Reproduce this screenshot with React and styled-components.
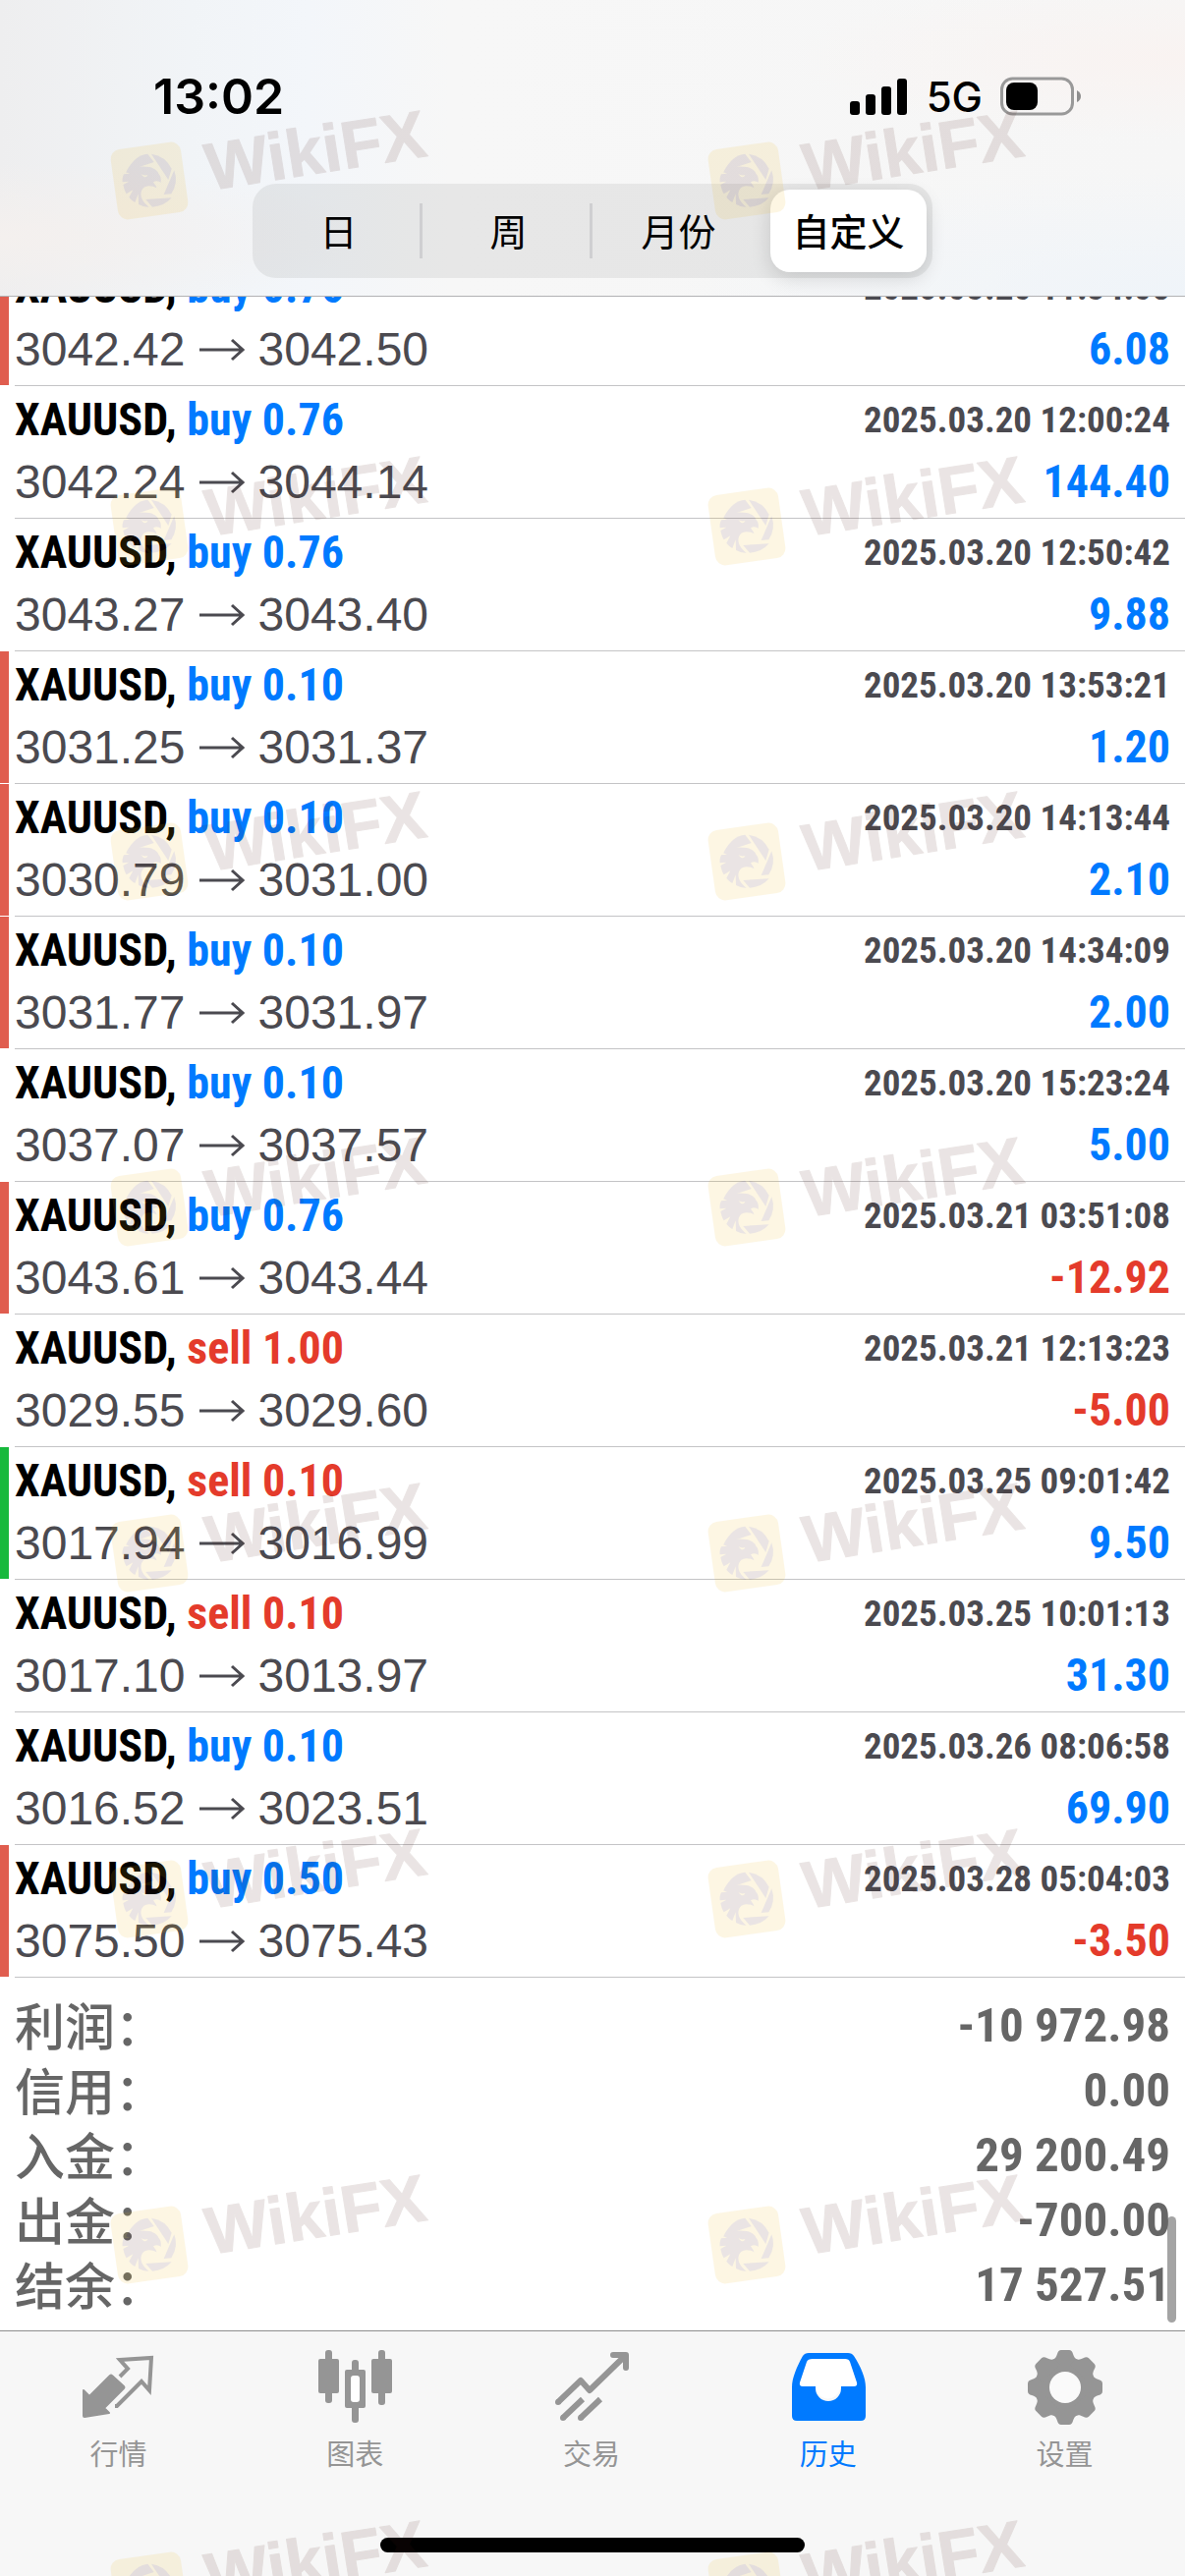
import React, { useState } from 'react';
import styled, { createGlobalStyle, ThemeProvider } from 'styled-components';

const theme = {
  colors: {
    blue: '#007aff',
    red: '#e43b2b',
    barRed: '#e05d4f',
    barGreen: '#17b93c',
    text: '#4b4a50',
    summary: '#666666',
    tab: '#959595',
    line: '#c4c4c6',
  },
  fonts: {
    bold: '"Roboto Condensed", "Liberation Sans", sans-serif',
    light: '"Liberation Sans", sans-serif',
    cjk: '"Noto Sans CJK SC", sans-serif',
    status: 'Inter, "Liberation Sans", sans-serif',
  },
};

const GlobalStyle = createGlobalStyle`
  *, *::before, *::after {
    box-sizing: border-box;
  }

  body {
    margin: 0;
    background: #fff;
  }

  button {
    border: none;
    background: none;
    padding: 0;
    color: inherit;
    cursor: pointer;
  }
`;

const Screen = styled.div`
  position: relative;
  display: flex;
  flex-direction: column;
  height: 100vh;
  overflow: hidden;
  background: #fff;
`;

const Header = styled.header`
  flex: none;
  padding: 67px 0 18px;
  border-bottom: 1px solid #b2b2b4;
  background:
    radial-gradient(ellipse at 0% 80%, #f4f0ee 0%, rgba(244, 240, 238, 0) 22%),
    radial-gradient(ellipse at 100% 20%, #f9f3f1 0%, rgba(249, 243, 241, 0) 24%),
    radial-gradient(ellipse at 100% 100%, #eff4f9 0%, rgba(239, 244, 249, 0) 30%),
    linear-gradient(90deg, #eeeeef 0%, #f1f4f7 16%, #f3f6fa 26%, #f7f7f7 38%, #f6f6f6 100%);
`;

const StatusBar = styled.div`
  display: flex;
  justify-content: space-between;
  align-items: center;
  padding: 0 106px 0 156px;
  color: #000;
  font-family: ${props => props.theme.fonts.status};
  line-height: 62px;
`;

const Clock = styled.time`
  font-size: 50px;
  font-weight: 600;
`;

const StatusIcons = styled.div`
  display: flex;
  align-items: center;
`;

const Network = styled.span`
  margin: 0 18px 0 20px;
  padding-top: 2px;
  font-size: 42px;
  font-weight: 500;
  line-height: 60px;
`;

const Segments = styled.div`
  display: grid;
  grid-template-columns: repeat(4, 1fr);
  width: 692px;
  height: 96px;
  margin: 58px auto 0;
  padding: 6px 0;
  border-radius: 24px;
  background: rgba(118, 118, 118, 0.12);
`;

const Segment = styled.div`
  display: flex;
  align-items: center;
  border-right: 3px solid transparent;
  border-image: ${props => props.$divider
    ? 'linear-gradient(transparent 18%, #cfcfd1 18%, #cfcfd1 82%, transparent 82%) 1'
    : 'none'};
`;

const SegmentButton = styled.button`
  flex: 1;
  height: 84px;
  margin: 0 3px 0 8px;
  padding-bottom: 4px;
  border-radius: 20px;
  background: ${props => (props.$active ? '#fff' : 'transparent')};
  box-shadow: ${props => (props.$active ? '0 6px 20px rgba(0, 0, 0, 0.14)' : 'none')};
  color: #000;
  font-family: ${props => props.theme.fonts.cjk};
  font-size: 38px;
  font-weight: ${props => (props.$active ? 500 : 400)};
`;

// keeps the newest deals and the totals in view, older ones slide under the header
const ScrollArea = styled.main`
  position: relative;
  flex: 1;
  min-height: 0;
  display: flex;
  flex-direction: column;
  justify-content: flex-end;
  overflow: hidden;
`;

const ScrollThumb = styled.div`
  position: absolute;
  right: 9px;
  bottom: 8px;
  width: 9px;
  height: 108px;
  border-radius: 5px;
  background: rgba(80, 80, 80, 0.52);
`;

const DealList = styled.ul`
  flex: none;
  margin: 0;
  padding: 0;
  list-style: none;
`;

const DealItem = styled.li`
  display: flex;
  gap: 6px;
`;

const Marker = styled.span`
  width: 9px;
  margin-bottom: 1px;
  background: ${props => (props.$color ? props.theme.colors[props.$color] : 'transparent')};
`;

const DealBody = styled.div`
  flex: 1;
  padding: 3px 15px 5px 0;
  border-bottom: 1px solid ${props => props.theme.colors.line};
`;

const Line = styled.div`
  display: flex;
  justify-content: space-between;
  align-items: center;
  height: 63px;
  line-height: 63px;
`;

const Deal = styled.span`
  color: #000;
  font-family: ${props => props.theme.fonts.bold};
  font-size: 46px;
  font-weight: 700;
`;

const Side = styled.span`
  color: ${props => (props.$side === 'buy' ? props.theme.colors.blue : props.theme.colors.red)};
`;

const DealTime = styled.time`
  color: ${props => props.theme.colors.text};
  font-family: ${props => props.theme.fonts.bold};
  font-size: 37px;
  font-weight: 700;
`;

const Prices = styled.span`
  display: flex;
  align-items: center;
  gap: 14px;
  color: ${props => props.theme.colors.text};
  font-family: ${props => props.theme.fonts.light};
  font-size: 48px;
`;

const Profit = styled.span`
  color: ${props => (props.$loss ? props.theme.colors.red : props.theme.colors.blue)};
  font-family: ${props => props.theme.fonts.bold};
  font-size: 46px;
  font-weight: 700;
`;

const Summary = styled.dl`
  flex: none;
  margin: 0;
  padding: 16px 15px 13px;
`;

const SummaryRow = styled.div`
  display: flex;
  justify-content: space-between;
  align-items: center;
  height: 66px;
  color: ${props => props.theme.colors.summary};
`;

const SummaryLabel = styled.dt`
  padding-bottom: 4px;
  font-family: ${props => props.theme.fonts.cjk};
  font-size: 51px;
  font-weight: 500;
  line-height: 62px;
`;

const SummaryValue = styled.dd`
  margin: 0;
  font-family: ${props => props.theme.fonts.bold};
  font-size: 49px;
  font-weight: 700;
  line-height: 66px;
`;

const Footer = styled.footer`
  flex: none;
  border-top: 1px solid #8e8e8e;
  background: #f7f7f7;
`;

const TabBar = styled.nav`
  display: grid;
  grid-template-columns: repeat(5, 1fr);
  padding: 17px 2px 0 0;
`;

const Tab = styled.button`
  display: flex;
  flex-direction: column;
  align-items: center;
  gap: 5px;
  color: ${props => (props.$active ? props.theme.colors.blue : props.theme.colors.tab)};
  font-family: ${props => props.theme.fonts.cjk};
  font-size: 29px;
  line-height: 42px;
`;

const HomeIndicator = styled.div`
  width: 432px;
  height: 15px;
  margin: 66px auto 24px;
  border-radius: 8px;
  background: #000;
`;

const WatermarkLayer = styled.div`
  position: absolute;
  inset: 0;
  display: grid;
  grid-template-columns: 608px 608px;
  grid-template-rows: 352px 341px;
  grid-auto-rows: 352px;
  padding: 104px 0 0 106px;
  overflow: hidden;
  pointer-events: none;
`;

const WatermarkMark = styled.svg`
  width: 340px;
  height: 130px;
  overflow: visible;
  opacity: 0.115;
  font-family: ${props => props.theme.fonts.light};
  font-size: 68px;
  font-weight: 700;
`;

const SEGMENTS = ['日', '周', '月份', '自定义'];

const DEALS = [
  { side: 'buy', volume: '0.76', time: '2025.03.20 11:34:08', open: '3042.42', close: '3042.50', profit: '6.08', marker: 'barRed' },
  { side: 'buy', volume: '0.76', time: '2025.03.20 12:00:24', open: '3042.24', close: '3044.14', profit: '144.40' },
  { side: 'buy', volume: '0.76', time: '2025.03.20 12:50:42', open: '3043.27', close: '3043.40', profit: '9.88' },
  { side: 'buy', volume: '0.10', time: '2025.03.20 13:53:21', open: '3031.25', close: '3031.37', profit: '1.20', marker: 'barRed' },
  { side: 'buy', volume: '0.10', time: '2025.03.20 14:13:44', open: '3030.79', close: '3031.00', profit: '2.10', marker: 'barRed' },
  { side: 'buy', volume: '0.10', time: '2025.03.20 14:34:09', open: '3031.77', close: '3031.97', profit: '2.00', marker: 'barRed' },
  { side: 'buy', volume: '0.10', time: '2025.03.20 15:23:24', open: '3037.07', close: '3037.57', profit: '5.00' },
  { side: 'buy', volume: '0.76', time: '2025.03.21 03:51:08', open: '3043.61', close: '3043.44', profit: '-12.92', marker: 'barRed' },
  { side: 'sell', volume: '1.00', time: '2025.03.21 12:13:23', open: '3029.55', close: '3029.60', profit: '-5.00' },
  { side: 'sell', volume: '0.10', time: '2025.03.25 09:01:42', open: '3017.94', close: '3016.99', profit: '9.50', marker: 'barGreen' },
  { side: 'sell', volume: '0.10', time: '2025.03.25 10:01:13', open: '3017.10', close: '3013.97', profit: '31.30' },
  { side: 'buy', volume: '0.10', time: '2025.03.26 08:06:58', open: '3016.52', close: '3023.51', profit: '69.90' },
  { side: 'buy', volume: '0.50', time: '2025.03.28 05:04:03', open: '3075.50', close: '3075.43', profit: '-3.50', marker: 'barRed' },
];

const SUMMARY = [
  ['利润：', '-10 972.98'],
  ['信用：', '0.00'],
  ['入金：', '29 200.49'],
  ['出金：', '-700.00'],
  ['结余：', '17 527.51'],
];

const SignalIcon = () => (
  <svg width="58" height="38" viewBox="0 0 58 38" fill="#000" aria-hidden="true">
    <rect x="0" y="24" width="10" height="14" rx="3" />
    <rect x="16" y="17" width="10" height="21" rx="3" />
    <rect x="32" y="9" width="10" height="29" rx="3" />
    <rect x="48" y="1" width="10" height="37" rx="3" />
  </svg>
);

const BatteryIcon = () => (
  <svg width="82" height="40" viewBox="0 0 82 40" aria-hidden="true">
    <rect x="1.5" y="2" width="72" height="36" rx="11" fill="none" stroke="#999" strokeWidth="3" />
    <rect x="6" y="6" width="32" height="28" rx="8" fill="#000" />
    <path d="M78 14 Q82 16 82 20 Q82 24 78 26Z" fill="#8e8e8e" />
  </svg>
);

const ArrowIcon = () => (
  <svg width="46" height="24" viewBox="0 0 46 24" fill="none" stroke="currentColor" strokeWidth="3" aria-label="→">
    <path d="M0 12H44M33 2L44 12L33 22" />
  </svg>
);

const QuotesIcon = () => (
  <svg width="80" height="80" viewBox="0 0 80 80" aria-hidden="true">
    <path
      d="M5 43L11 49L32 28Q33 27 34 28L46 39Q47 40 46 41L26 61L31 66L6 70Q5 70 5 69Z"
      fill="currentColor"
      stroke="currentColor"
      strokeWidth="2"
      strokeLinejoin="round"
    />
    <path
      d="M42 29L50 21L42 12L74 10L72 43L64 34L39 59H37"
      fill="none"
      stroke="currentColor"
      strokeWidth="4"
    />
  </svg>
);

const ChartIcon = () => (
  <svg width="80" height="80" viewBox="0 0 80 80" fill="currentColor" aria-hidden="true">
    <rect x="10" y="2" width="7" height="54" rx="3" />
    <rect x="3" y="11" width="21" height="35" rx="2" />
    <rect x="37" y="12" width="7" height="64" rx="3" />
    <rect x="30" y="22" width="21" height="39" rx="2" />
    <rect x="36" y="28" width="9" height="27" rx="3" fill="#fff" />
    <rect x="64" y="2" width="7" height="56" rx="3" />
    <rect x="57" y="11" width="21" height="35" rx="2" />
  </svg>
);

const TradeIcon = () => (
  <svg width="80" height="80" viewBox="0 0 80 80" fill="none" stroke="currentColor" strokeWidth="6" aria-hidden="true">
    <path d="M6 55L29 33L38 43L74 8" strokeLinejoin="round" />
    <path d="M62 7H75V20" strokeLinecap="round" strokeLinejoin="round" />
    <path d="M11 71L31 52M29 71L49 52" />
    <g fill="currentColor" stroke="none">
      <circle cx="6" cy="55" r="3" />
      <circle cx="11" cy="71" r="3" />
      <circle cx="29" cy="71" r="3" />
    </g>
  </svg>
);

const HistoryIcon = () => (
  <svg width="80" height="80" viewBox="0 0 80 80" fill="currentColor" aria-hidden="true">
    <path d="M24 11H57Q61 11 62 14L69 35Q70 39 66 39H52V42A13 13 0 0 1 27 42V39H14Q10 39 11 35L18 14Q19 11 24 11Z" fill="#fff" />
    <path
      fillRule="evenodd"
      d="M20 5H60Q64 5 66 8C73 19 78 30 78 40V69Q78 74 73 74H8Q3 74 3 69V40C3 30 8 19 14 8Q16 5 20 5ZM24 11H57Q61 11 62 14L69 35Q70 39 66 39H53V41A13 13 0 0 1 27 41V39H14Q10 39 11 35L18 14Q19 11 24 11Z"
    />
  </svg>
);

const TEETH = [0, 45, 90, 135, 180, 225, 270, 315];

const SettingsIcon = () => (
  <svg width="80" height="80" viewBox="-40 -40 80 80" fill="currentColor" aria-hidden="true">
    <circle r="30" />
    {TEETH.map(angle => (
      <path
        key={angle}
        d="M-13 -28C-10 -29 -9 -31 -8 -34Q-7 -38 -4 -38H4Q7 -38 8 -34C9 -31 10 -29 13 -28V-20H-13Z"
        transform={`rotate(${angle})`}
      />
    ))}
    <circle r="16" fill="#fafafa" />
  </svg>
);

const TABS = [
  { label: '行情', Icon: QuotesIcon },
  { label: '图表', Icon: ChartIcon },
  { label: '交易', Icon: TradeIcon },
  { label: '历史', Icon: HistoryIcon },
  { label: '设置', Icon: SettingsIcon },
];

const Watermark = () => (
  <WatermarkMark viewBox="0 0 340 130" aria-hidden="true">
    <g transform="translate(46 80) rotate(-8)">
      <rect x="-36" y="-36" width="72" height="72" rx="10" fill="#eeb414" />
      <g transform="scale(0.333) rotate(8)" fill="#50201a">
        <path d="M-70 -29Q-45 -78 -5 -82L14 -57Z" />
        <path d="M6 -82A82 82 0 0 1 68 -37L58 -3Z" />
        <path d="M76 -32A82 82 0 0 1 67 40L44 42Z" />
        <path d="M-11 57L68 52A82 82 0 0 1 9 80Z" />
        <path d="M-72 -26C-60 -40 -35 -47 0 -42C18 -38 28 -26 28 -22C34 -16 37 -8 35 6C30 0 20 -2 12 4C16 12 22 16 22 22C10 14 -12 12 -20 24C-32 40 -25 62 -1 80C-14 80 -24 77 -33 72L-34 40L-44 66C-50 62 -58 56 -62 50L-50 28L-70 40C-75 32 -78 22 -80 12L-62 2L-82 4C-83 -4 -82 -12 -78 -20L-60 -22Z" />
        <path d="M-26 -20Q-15 -15 -5 -18Q-8 -9 -17 -12Z" fill="#eeb414" />
      </g>
    </g>
    <text x="0" y="0" transform="translate(107 90) rotate(-9)" fill="#50201a" stroke="#50201a" strokeWidth="1" strokeLinejoin="round">
      WikiFX
    </text>
  </WatermarkMark>
);

function DealRow({ deal }) {
  return (
    <DealItem>
      <Marker $color={deal.marker} />
      <DealBody>
        <Line>
          <Deal>
            XAUUSD, <Side $side={deal.side}>{deal.side} {deal.volume}</Side>
          </Deal>
          <DealTime>{deal.time}</DealTime>
        </Line>
        <Line>
          <Prices>
            {deal.open}
            <ArrowIcon />
            {deal.close}
          </Prices>
          <Profit $loss={deal.profit.startsWith('-')}>{deal.profit}</Profit>
        </Line>
      </DealBody>
    </DealItem>
  );
}

function App() {
  const [period, setPeriod] = useState('自定义');
  const [tab, setTab] = useState('历史');

  return (
    <ThemeProvider theme={theme}>
      <GlobalStyle />
      <Screen>
        <Header>
          <StatusBar>
            <Clock>13:02</Clock>
            <StatusIcons>
              <SignalIcon />
              <Network>5G</Network>
              <BatteryIcon />
            </StatusIcons>
          </StatusBar>
          <Segments>
            {SEGMENTS.map((name, index) => (
              <Segment key={name} $divider={index < 2}>
                <SegmentButton
                  $active={period === name}
                  aria-pressed={period === name}
                  onClick={() => setPeriod(name)}
                >
                  {name}
                </SegmentButton>
              </Segment>
            ))}
          </Segments>
        </Header>

        <ScrollArea>
          <DealList>
            {DEALS.map(deal => (
              <DealRow key={deal.time} deal={deal} />
            ))}
          </DealList>
          <Summary>
            {SUMMARY.map(([label, value]) => (
              <SummaryRow key={label}>
                <SummaryLabel>{label}</SummaryLabel>
                <SummaryValue>{value}</SummaryValue>
              </SummaryRow>
            ))}
          </Summary>
          <ScrollThumb />
        </ScrollArea>

        <Footer>
          <TabBar>
            {TABS.map(({ label, Icon }) => (
              <Tab key={label} $active={tab === label} onClick={() => setTab(label)}>
                <Icon />
                {label}
              </Tab>
            ))}
          </TabBar>
          <HomeIndicator />
        </Footer>

        <WatermarkLayer>
          {Array.from({ length: 16 }, (_, index) => (
            <Watermark key={index} />
          ))}
        </WatermarkLayer>
      </Screen>
    </ThemeProvider>
  );
}

export default App;
